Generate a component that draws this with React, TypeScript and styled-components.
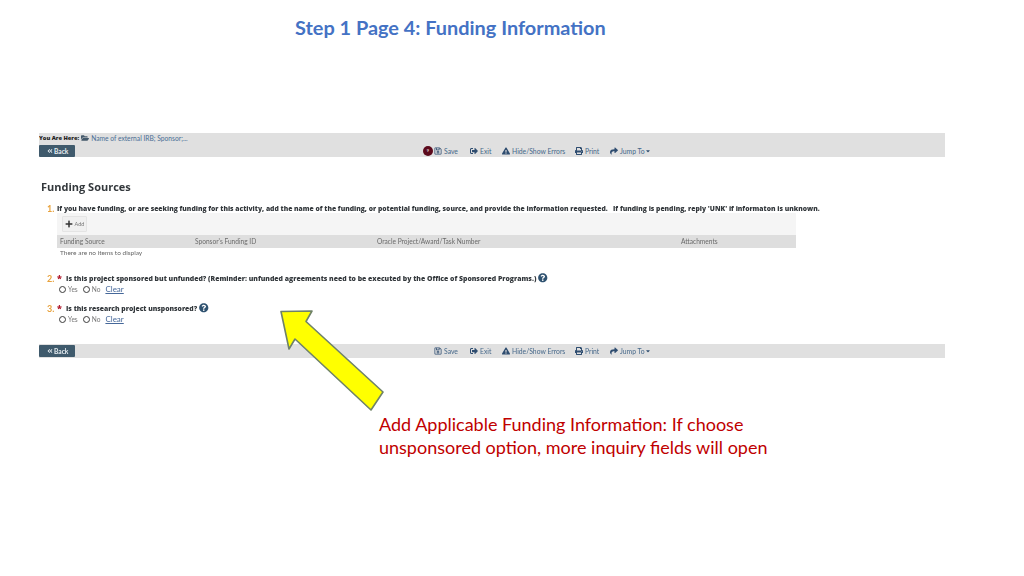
import React, { FC } from 'react'
import styled, { createGlobalStyle } from 'styled-components'
import {
  FaAngleDoubleLeft,
  FaCaretDown,
  FaExclamationTriangle,
  FaFolderOpen,
  FaPlus,
  FaPrint,
  FaQuestionCircle,
  FaRegSave,
  FaShare,
  FaSignOutAlt,
} from 'react-icons/fa'

const GlobalStyle = createGlobalStyle`
  html, body {
    margin: 0;
    padding: 0;
    background: #fff;
  }
`

const Page = styled.div`
  position: relative;
  width: 1024px;
  height: 576px;
  overflow: hidden;
  background: #fff;
  font-family: Lato, 'Liberation Sans', sans-serif;
`

const Title = styled.h1`
  margin: 0;
  padding: 15px 0 1px 295px;
  height: 24px;
  font-size: 19.9px;
  line-height: 24px;
  font-weight: 700;
  color: #4472c4;
`

const Shot = styled.div`
  margin: 93px 0 0 39px;
  width: 906px;
  filter: blur(0.3px);
`

const TopBar = styled.div`
  background: #e0e0e0;
  height: 24px;
`

const Crumb = styled.div`
  height: 12px;
  box-sizing: border-box;
  padding-bottom: 3px;
  display: flex;
  align-items: center;
  gap: 2px;
  font-size: 5.7px;
  color: #222;
  white-space: nowrap;

  b {
    font-family: 'Open Sans', sans-serif;
    font-weight: 800;
  }
  span {
    color: #4a6f96;
    font-size: 6.7px;
  }
  svg {
    color: #44596b;
    font-size: 8px;
  }
`

const BarRow = styled.div`
  height: 12px;
  display: flex;
  align-items: center;
`

const BottomBar = styled(BarRow)`
  margin-top: 20px;
  height: 14px;
  background: #e0e0e0;
`

const BackButton = styled.div`
  width: 36px;
  height: 12px;
  flex: none;
  box-sizing: border-box;
  padding-left: 8px;
  display: flex;
  align-items: center;
  gap: 1px;
  background: #3f5a6c;
  color: #e8eef2;
  border-radius: 1px;
  font-size: 6.6px;
  font-weight: 700;

  svg {
    font-size: 6px;
  }
`

const Actions = styled.div<{ $left: number }>`
  margin-left: ${(p) => p.$left}px;
  display: flex;
  align-items: center;
  height: 12px;
`

const Badge = styled.div`
  width: 10px;
  height: 10px;
  border-radius: 50%;
  background: #5c0a1c;
  margin-right: 1px;
  color: #fff;
  font-size: 4px;
  line-height: 10px;
  text-align: center;
`

const Action = styled.div<{ $w: number }>`
  width: ${(p) => p.$w}px;
  display: flex;
  align-items: center;
  gap: 2px;
  font-size: 6.8px;
  color: #46688a;
  white-space: nowrap;

  svg {
    flex: none;
    font-size: 8px;
    color: #2f4d70;
  }
`

const Heading = styled.h2`
  margin: 22px 0 0 2px;
  height: 16px;
  font-family: 'Open Sans', sans-serif;
  font-size: 11px;
  line-height: 16px;
  font-weight: 700;
  color: #33383c;
`

const Question = styled.div<{ $top: number; $size: number }>`
  margin-top: ${(p) => p.$top}px;
  margin-left: 8px;
  height: 10px;
  display: flex;
  align-items: center;
  font-family: 'Open Sans', sans-serif;
  font-size: ${(p) => p.$size}px;
  font-weight: 800;
  color: #33383c;
  white-space: pre;
`

const Num = styled.span`
  width: 10px;
  flex: none;
  color: #e8a23c;
  font-family: Lato, sans-serif;
  font-size: 9px;
  font-weight: 700;
`

const Star = styled.span`
  width: 9px;
  flex: none;
  color: #b0182c;
  font-size: 9px;
`

const HelpIcon = styled(FaQuestionCircle)`
  margin-left: 2px;
  flex: none;
  font-size: 9.5px;
  color: #2f5270;
`

const Table = styled.div`
  margin: 0 0 0 18px;
  width: 739px;
`

const TableTools = styled.div`
  height: 22px;
  box-sizing: border-box;
  padding: 3px 0 0 5px;
  background: #f5f5f5;
`

const AddButton = styled.div`
  width: 25px;
  height: 16px;
  box-sizing: border-box;
  display: flex;
  align-items: center;
  justify-content: center;
  gap: 2px;
  background: #f0f0f0;
  border: 1px solid #e4e4e4;
  border-radius: 1px;
  font-size: 5.5px;
  color: #777;

  svg {
    font-size: 8px;
    color: #333;
  }
`

const HeaderRow = styled.div`
  height: 13px;
  box-sizing: border-box;
  padding: 0 0 1px 3px;
  display: grid;
  grid-template-columns: 135px 182px 304px 1fr;
  align-items: center;
  background: #dedede;
  font-size: 6.6px;
  color: #6a6a6a;
`

const EmptyRow = styled.div`
  height: 10px;
  padding-left: 3px;
  font-size: 6.5px;
  line-height: 10px;
  color: #666;
`

const RadioRow = styled.div`
  margin: 1px 0 0 20px;
  height: 10px;
  display: flex;
  align-items: center;
  font-size: 6.6px;
  color: #777;
`

const Radio = styled.span`
  width: 7px;
  height: 7px;
  box-sizing: border-box;
  border: 1.3px solid #3a3a3a;
  border-radius: 50%;
  margin-right: 2px;
`

const RadioLabel = styled.span`
  margin-right: 5px;
`

const ClearLink = styled.a`
  font-size: 8px;
  color: #46689a;
  text-decoration: underline;
`

const Arrow = styled.svg`
  position: absolute;
  left: 0;
  top: 0;
  pointer-events: none;
`

const Caption = styled.p`
  margin: 55px 0 0 379px;
  font-size: 18px;
  line-height: 23px;
  color: #c00000;
`

const ToolbarActions: FC<{ left: number; badge?: boolean }> = ({ left, badge }) => (
  <Actions $left={left}>
    {badge && <Badge>9</Badge>}
    <Action $w={36}>
      <FaRegSave /> Save
    </Action>
    <Action $w={32}>
      <FaSignOutAlt /> Exit
    </Action>
    <Action $w={73}>
      <FaExclamationTriangle /> Hide/Show Errors
    </Action>
    <Action $w={35}>
      <FaPrint /> Print
    </Action>
    <Action $w={42}>
      <FaShare /> Jump To
      <FaCaretDown style={{ fontSize: 6, marginLeft: -2 }} />
    </Action>
  </Actions>
)

const RadioChoices: FC = () => (
  <RadioRow>
    <Radio />
    <RadioLabel>Yes</RadioLabel>
    <Radio />
    <RadioLabel>No</RadioLabel>
    <ClearLink href="#">Clear</ClearLink>
  </RadioRow>
)

const App: FC = () => {
  return (
    <Page>
      <GlobalStyle />
      <Title>Step 1 Page 4: Funding Information</Title>
      <Shot>
        <TopBar>
          <Crumb>
            <b>You Are Here:</b>
            <FaFolderOpen />
            <span>Name of external IRB; Sponsor;...</span>
          </Crumb>
          <BarRow>
            <BackButton>
              <FaAngleDoubleLeft /> Back
            </BackButton>
            <ToolbarActions left={348} badge />
          </BarRow>
        </TopBar>
        <Heading>Funding Sources</Heading>
        <Question $top={8} $size={6.76}>
          <Num>1.</Num>
          If you have funding, or are seeking funding for this activity, add the name of the funding, or potential funding, source, and provide the information requested.   If funding is pending, reply 'UNK' if informaton is unknown.
        </Question>
        <Table>
          <TableTools>
            <AddButton>
              <FaPlus /> Add
            </AddButton>
          </TableTools>
          <HeaderRow>
            <span>Funding Source</span>
            <span>Sponsor's Funding ID</span>
            <span>Oracle Project/Award/Task Number</span>
            <span>Attachments</span>
          </HeaderRow>
          <EmptyRow>There are no items to display</EmptyRow>
        </Table>
        <Question $top={15} $size={6.86}>
          <Num>2.</Num>
          <Star>*</Star>
          Is this project sponsored but unfunded? (Reminder: unfunded agreements need to be executed by the Office of Sponsored Programs.)
          <HelpIcon />
        </Question>
        <RadioChoices />
        <Question $top={9} $size={6.8}>
          <Num>3.</Num>
          <Star>*</Star>
          Is this research project unsponsored?
          <HelpIcon />
        </Question>
        <RadioChoices />
        <BottomBar>
          <BackButton>
            <FaAngleDoubleLeft /> Back
          </BackButton>
          <ToolbarActions left={359} />
        </BottomBar>
      </Shot>
      <Caption>
        Add Applicable Funding Information: If choose
        <br />
        unsponsored option, more inquiry fields will open
      </Caption>
      <Arrow width="1024" height="576" viewBox="0 0 1024 576">
        <polygon
          points="281,311.5 312,311 306,321.5 383,392 371,410 295,339 289,349"
          fill="#ffff00"
          stroke="#6f8268"
          strokeWidth="1.6"
          strokeLinejoin="round"
        />
      </Arrow>
    </Page>
  )
}

export default App
